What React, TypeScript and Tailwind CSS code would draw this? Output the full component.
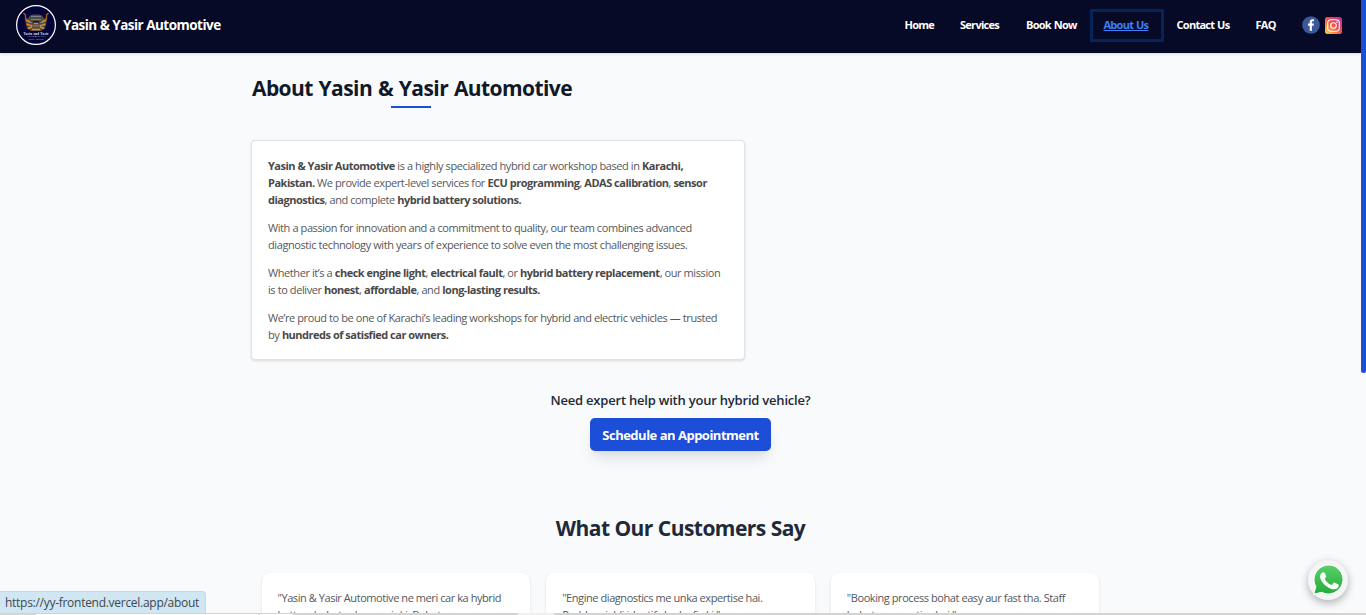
import type { ReactNode } from 'react';

function Line({ children }: { children: ReactNode }) {
  return <span className="block whitespace-nowrap">{children}</span>;
}

function B({ children }: { children: ReactNode }) {
  return <strong className="font-bold tracking-[-0.49px] text-[#494949]">{children}</strong>;
}

function Logo() {
  return (
    <svg width="40" height="40" viewBox="0 0 40 40" className="block shrink-0">
      <circle cx="20" cy="20" r="19.4" fill="#03043a" stroke="#fff" strokeWidth="1.2" />
      <path d="M7.500 8l2 2v4l4 1M32.500 8l-2 2v4l-4 1" fill="none" stroke="#a8641f" strokeWidth="1.300" />
      <path d="M14 10.500l3-1h6l3 1 3 4 2 1-1 4-1 4-4 2.500H15L11 23.500l-1-4-1-4 2-1z" fill="#54493f" />
      <path d="M10 15l4 2M30 15l-4 2M10.500 19l4 1.500h2M29.500 19l-4 1.500h-2M12 23.500l4-1.500M28 23.500l-4-1.500M18 18.500h4M16 24.500h8" fill="none" stroke="#e08a26" strokeWidth="1.500" />
      <path d="M15 11.500h10M15 14.500h10M17 21h6M13 17.500h3M24 17.500h3" fill="none" stroke="#74828f" strokeWidth="1" />
      <path d="M17 16h6v1.500h-6z" fill="#15172f" />
      <text x="20" y="29.800" textAnchor="middle" fontSize="3.200" fontWeight="700" fill="#e4e4ee" fontFamily="Liberation Serif, serif" textLength="25">Yasin and Yasir</text>
      <text x="20" y="32.300" textAnchor="middle" fontSize="2.800" fill="#d4d4e2" fontFamily="Liberation Serif, serif" textLength="19">Automotive</text>
      <path d="M12.500 34.500h6M20 34.500h8" stroke="#8d5418" strokeWidth=".7" />
    </svg>
  );
}

function Facebook() {
  return (
    <svg width="18" height="18" viewBox="0 0 18 18" className="block">
      <circle cx="9" cy="9" r="8.800" fill="#3b5998" />
      <path d="M7.700 14.800V9.700H6V7.600h1.700V6.200c0-1.900 1-3 2.700-3 .7 0 1.300.1 1.500.1v2h-1.100c-.7 0-.9.4-.9 1v1.300h2l-.3 2.100H9.900v5.100z" fill="#fff" />
    </svg>
  );
}

function Instagram() {
  return (
    <svg width="17" height="17" viewBox="0 0 17 17" className="block">
      <defs>
        <linearGradient id="ig" x1="0" y1="1" x2="1" y2="0">
          <stop offset="0" stopColor="#ffd04f" />
          <stop offset=".3" stopColor="#fb8a3c" />
          <stop offset=".58" stopColor="#f5424f" />
          <stop offset="1" stopColor="#b42bb0" />
        </linearGradient>
      </defs>
      <rect width="17" height="17" rx="2.500" fill="url(#ig)" />
      <rect x="2.700" y="2.700" width="11.600" height="11.600" rx="3.200" fill="none" stroke="#fff" strokeWidth="1.100" />
      <circle cx="8.500" cy="8.500" r="2.800" fill="none" stroke="#fff" strokeWidth="1.100" />
      <circle cx="11.900" cy="5.100" r=".8" fill="#fff" />
    </svg>
  );
}

function WhatsApp() {
  return (
    <svg width="32" height="32" viewBox="-1 -1 32 32" className="block">
      <defs>
        <linearGradient id="wa" x1="0" y1="0" x2="0" y2="1">
          <stop offset="0" stopColor="#5bcf67" />
          <stop offset="1" stopColor="#22ae3c" />
        </linearGradient>
      </defs>
      <path d="M1.400 28.600l2-7.100A14 14 0 1 1 8.700 26.700z" fill="url(#wa)" stroke="#fff" strokeWidth="2" paintOrder="stroke" />
      <path d="M10.200 7.200c-.5 0-1.100.2-1.600.8-.7.8-1.500 1.800-1.500 3.800 0 2.200 1.600 4.400 1.900 4.700.3.400 3.300 5.100 8.100 6.900 3.900 1.500 4.700.7 5.500.6.900-.1 2.500-1.100 2.800-2.100.4-1 .4-1.900.2-2.100-.2-.3-.5-.4-1-.7l-2.900-1.400c-.5-.2-.8-.2-1.200.3l-1.300 1.600c-.3.300-.6.400-1.100.1-.5-.2-2-.8-3.700-2.300-1.400-1.200-2.300-2.700-2.600-3.200-.2-.4 0-.7.300-1l.9-1.100c.2-.3.300-.5.200-.9l-1.300-3.100c-.4-.8-.8-.9-1.700-.9z" fill="#fff" />
    </svg>
  );
}

const navLink = 'flex h-[33px] items-center whitespace-nowrap text-[11px] font-bold leading-4 tracking-[-0.72px] [word-spacing:0.6px]';

const testimonials = [
  ['"Yasin & Yasir Automotive ne meri car ka hybrid', 'battery bohat acha repair ki. Bohat'],
  ['"Engine diagnostics me unka expertise hai.', 'Problem jaldi identify karke fix ki."'],
  ['"Booking process bohat easy aur fast tha. Staff', 'bohat cooperative hai."'],
];

export default function App() {
  return (
    <div className="relative flex h-[615px] overflow-hidden bg-[#f8fafc] font-['Open_Sans','Noto_Sans',sans-serif]">
      <div className="w-[1361px] shrink-0">
        <header className="flex h-[53px] items-center justify-between bg-[#060a26] pb-[3px] pl-4 pr-[19px] shadow-sm">
          <div className="flex items-center gap-[7px]">
            <Logo />
            <span className="whitespace-nowrap text-[13.5px] font-bold leading-5 tracking-[-0.52px] text-white">Yasin &amp; Yasir Automotive</span>
          </div>
          <div className="flex items-center">
            <nav className="flex items-center text-white">
              <a className={`${navLink} w-[55.5px]`}>Home</a>
              <a className={`${navLink} w-[66px]`}>Services</a>
              <a className={`${navLink} w-[64px]`}>Book Now</a>
              <a className={`${navLink} w-[74px] border-[3px] border-[#06235a] pl-[10.5px] text-[#3b82f6] underline`}>About Us</a>
              <a className={`${navLink} ml-[12.5px] w-[79px]`}>Contact Us</a>
              <a className={`${navLink} w-[46.5px]`}>FAQ</a>
            </nav>
            <div className="flex items-center gap-[5px]">
              <Facebook />
              <Instagram />
            </div>
          </div>
        </header>

        <main className="mx-auto w-[859px]">
          <div className="flex w-[320px] flex-col items-center pt-[19px]">
            <h1 className="self-start whitespace-nowrap pl-px text-[21px] font-bold leading-8 tracking-[-0.58px] text-[#111827] [word-spacing:0.9px]">About Yasin &amp; Yasir Automotive</h1>
            <div className="mt-[2px] h-[2px] w-10 bg-[#1d4ed8]" />
          </div>

          <section className="mt-8 flex h-[220px] w-[494px] flex-col gap-[11px] rounded-[4px] border border-[#dfe2e8] bg-white px-4 pt-4 text-[11px] leading-[17px] tracking-[-0.41px] text-[#55585c] shadow-sm">
            <p>
              <Line><B>Yasin &amp; Yasir Automotive</B> is a highly specialized hybrid car workshop based in <B>Karachi,</B></Line>
              <Line><B>Pakistan.</B> We provide expert-level services for <B>ECU programming</B>, <B>ADAS calibration</B>, <B>sensor</B></Line>
              <Line><B>diagnostics</B>, and complete <B>hybrid battery solutions.</B></Line>
            </p>
            <p>
              <Line>With a passion for innovation and a commitment to quality, our team combines advanced</Line>
              <Line>diagnostic technology with years of experience to solve even the most challenging issues.</Line>
            </p>
            <p>
              <Line>Whether it’s a <B>check engine light</B>, <B>electrical fault</B>, or <B>hybrid battery replacement</B>, our mission</Line>
              <Line>is to deliver <B>honest</B>, <B>affordable</B>, and <B>long-lasting results.</B></Line>
            </p>
            <p>
              <Line>We’re proud to be one of Karachi’s leading workshops for hybrid and electric vehicles — trusted</Line>
              <Line>by <B>hundreds of satisfied car owners.</B></Line>
            </p>
          </section>

          <section className="flex flex-col items-center pt-[30px]">
            <p className="whitespace-nowrap text-[13px] font-semibold leading-5 tracking-[-0.21px] text-[#1f2937]">Need expert help with your hybrid vehicle?</p>
            <button className="mt-2 flex h-[33px] w-[181px] items-center justify-center whitespace-nowrap rounded-[5px] bg-[#1d4ed8] pt-px text-[13px] font-bold leading-5 tracking-[-0.5px] text-white shadow-lg">Schedule an Appointment</button>
          </section>

          <section className="flex flex-col items-center pt-[61px]">
            <h2 className="whitespace-nowrap text-[21px] font-bold leading-8 tracking-[-0.53px] text-[#1f2937]">What Our Customers Say</h2>
            <div className="mt-[29px] grid w-[838px] grid-cols-3 gap-4">
              {testimonials.map((t) => (
                <div key={t[0]} className="h-[120px] rounded-lg bg-white px-4 pt-4 text-[11px] leading-[17px] tracking-[-0.43px] text-[#55585c] shadow-sm">
                  {t.map((l) => <Line key={l}>{l}</Line>)}
                </div>
              ))}
            </div>
          </section>
        </main>
      </div>
      <div className="h-[373px] w-[5px] shrink-0 rounded-b-[3px] bg-[#1d4ed8]" />

      <div className="absolute left-[1308px] top-[560px] flex h-10 w-10 items-center justify-center rounded-full bg-[#f5f5f5] shadow-[0_3px_8px_rgba(0,0,0,0.3)]">
        <WhatsApp />
      </div>
      <div className="absolute bottom-0 left-0 flex h-6 w-[206px] items-center rounded-tr-[4px] border-r border-t border-[#c9d8e2] bg-[#d0e6f3] pb-px pl-[5px] text-[12px] leading-4 tracking-[-0.28px] text-[#3c4650]">https://yy-frontend.vercel.app/about</div>
      <div className="absolute bottom-0 left-0 flex h-[2px] w-full items-end bg-[#d3d3d3]">
        <div className="ml-9 h-px w-[222px] bg-white" />
        <div className="ml-[2px] h-px w-[33px] bg-white" />
        <div className="ml-[225px] h-[2px] w-9 bg-[#f0f0f0]" />
      </div>
    </div>
  );
}
